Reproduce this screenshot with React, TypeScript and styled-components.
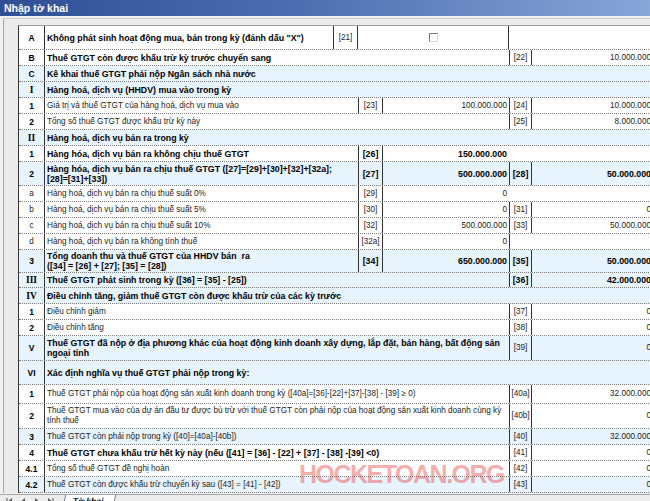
import React from "react";
import styled, { createGlobalStyle } from "styled-components";

const GlobalStyle = createGlobalStyle`
  html, body {
    margin: 0;
    padding: 0;
    background: #f0f0f0;
  }
  body {
    font-family: "Liberation Sans", Arial, sans-serif;
  }
`;

const COLS = "26px 288px 25px 25px 126px 23px 121px";

const Window = styled.div`
  position: relative;
  width: 650px;
  height: 501px;
  overflow: hidden;
  display: flex;
  flex-direction: column;
  background: #f0f0f0;
`;

const TitleBar = styled.div`
  flex: none;
  height: 16px;
  padding-left: 4px;
  line-height: 16px;
  color: #fff;
  font-size: 10.5px;
  font-weight: bold;
  background: linear-gradient(to right, #2f4f94 0%, #4c6daf 45%, #88a6d8 100%);
`;

const Sheet = styled.div`
  flex: none;
  margin: 2px 0 0 3px;
  padding: 6px 0 0 14px;
  border-top: 1px solid #cbcbcb;
  border-left: 1px solid #a7a7a7;
  background: #ebebeb;
`;

const Table = styled.div`
  width: 636px;
  border-top: 1px solid #a0a0a0;
  border-left: 1px solid #333;
  background: #fff;
`;

const Row = styled.div<{ $h: number; $blue?: boolean }>`
  display: grid;
  grid-template-columns: ${COLS};
  height: ${(p) => p.$h}px;
  box-sizing: border-box;
  border-bottom: 1px dotted #7d7d7d;
  background: ${(p) => (p.$blue ? "#e7f3fd" : "#fff")};
`;

const Base = styled.div<{ $span?: number; $bold?: boolean }>`
  grid-column: span ${(p) => p.$span ?? 1};
  box-sizing: border-box;
  display: flex;
  align-items: center;
  min-width: 0;
  overflow: hidden;
  white-space: nowrap;
  line-height: 10px;
  color: ${(p) => (p.$bold ? "#000" : "#1c1c1c")};
  font-size: ${(p) => (p.$bold ? "8.8px" : "8.2px")};
  font-weight: ${(p) => (p.$bold ? "bold" : "normal")};
`;

const Stt = styled(Base)<{ $serif?: boolean }>`
  justify-content: center;
  border-right: 1px solid #333;
  font-family: ${(p) => (p.$serif ? '"Liberation Serif", serif' : "inherit")};
  font-size: ${(p) => (p.$serif ? "9.5px" : p.$bold ? "8.5px" : "8.2px")};
`;

const Desc = styled(Base)`
  padding-left: 2px;
`;

const Code = styled(Base)`
  justify-content: center;
  border-left: 1px solid #333;
  border-right: 1px solid #333;
`;

const Val = styled(Base)`
  justify-content: flex-end;
  padding-right: 2px;
`;

const Blank = styled(Base)<{ $edge?: boolean }>`
  border-left: ${(p) => (p.$edge ? "1px solid #333" : "none")};
`;

const CheckCell = styled(Base)`
  justify-content: center;
  border-right: 1px solid #333;
`;

const CheckBox = styled.span`
  width: 7px;
  height: 7px;
  border: 1px solid;
  border-color: #7a7a7a #d8d8d8 #d8d8d8 #7a7a7a;
  background: #fff;
`;

const TabBar = styled.div`
  flex: none;
  display: flex;
  align-items: flex-start;
  gap: 4px;
  height: 12px;
  margin-top: 1px;
  padding-left: 6px;
  border-top: 1px solid #a9a9a9;
  background: #ececec;
`;

const NavButton = styled.span`
  display: flex;
  align-items: center;
  justify-content: center;
  width: 9px;
  height: 10px;
  margin-top: 1px;
  color: #555;
`;

const SheetTab = styled.span`
  margin-left: 6px;
  padding: 0 10px 0 8px;
  height: 11px;
  line-height: 13px;
  font-size: 8.5px;
  font-weight: bold;
  background: #fff;
  border-left: 1px solid #7a7a7a;
  border-right: 1px solid #7a7a7a;
  transform: skewX(-12deg);
`;

const Watermark = styled.div`
  position: absolute;
  left: 299px;
  top: 462px;
  font-size: 25px;
  line-height: 25px;
  font-weight: bold;
  letter-spacing: -1.5px;
  color: rgba(232, 70, 70, 0.45);
  pointer-events: none;
`;

type CellData =
  | { t: "d"; text: React.ReactNode; span: number; bold?: boolean }
  | { t: "c"; text: string; bold?: boolean }
  | { t: "v"; text: string; bold?: boolean }
  | { t: "e"; span: number; edge?: boolean }
  | { t: "x"; span: number };

type RowData = {
  stt: string;
  h?: number;
  blue?: boolean;
  serif?: boolean;
  plain?: boolean;
  cells: CellData[];
};

const d = (text: React.ReactNode, span: number, bold = false): CellData => ({ t: "d", text, span, bold });
const c = (text: string, bold = false): CellData => ({ t: "c", text, bold });
const v = (text: string, bold = false): CellData => ({ t: "v", text, bold });
const e = (span: number, edge = false): CellData => ({ t: "e", span, edge });

const rows: RowData[] = [
  { stt: "A", h: 24, cells: [d('Không phát sinh hoạt động mua, bán trong kỳ (đánh dấu "X")', 1, true), c("[21]"), { t: "x", span: 2 }, e(2)] },
  { stt: "B", cells: [d("Thuế GTGT còn được khấu trừ kỳ trước chuyển sang", 4, true), c("[22]"), v("10.000.000")] },
  { stt: "C", blue: true, cells: [d("Kê khai thuế GTGT phải nộp Ngân sách nhà nước", 6, true)] },
  { stt: "I", serif: true, blue: true, cells: [d("Hàng hoá, dịch vụ (HHDV) mua vào trong kỳ", 6, true)] },
  { stt: "1", cells: [d("Giá trị và thuế GTGT của hàng hoá, dịch vụ mua vào", 2), c("[23]"), v("100.000.000"), c("[24]"), v("10.000.000")] },
  { stt: "2", cells: [d("Tổng số thuế GTGT  được khấu trừ kỳ này", 4), c("[25]"), v("8.000.000")] },
  { stt: "II", serif: true, blue: true, cells: [d("Hàng hoá, dịch vụ bán ra trong kỳ", 6, true)] },
  { stt: "1", cells: [d("Hàng hóa, dịch vụ bán ra không chịu thuế GTGT", 2, true), c("[26]", true), v("150.000.000", true), e(2)] },
  {
    stt: "2",
    h: 24,
    blue: true,
    cells: [
      d(<>Hàng hóa, dịch vụ bán ra chịu thuế GTGT ([27]=[29]+[30]+[32]+[32a];<br />[28]=[31]+[33])</>, 2, true),
      c("[27]", true),
      v("500.000.000", true),
      c("[28]", true),
      v("50.000.000", true),
    ],
  },
  { stt: "a", plain: true, cells: [d("Hàng hoá, dịch vụ bán ra chịu thuế suất 0%", 2), c("[29]"), v("0"), e(2)] },
  { stt: "b", plain: true, cells: [d("Hàng hoá, dịch vụ bán ra chịu thuế suất 5%", 2), c("[30]"), v("0"), c("[31]"), v("0")] },
  { stt: "c", plain: true, cells: [d("Hàng hoá, dịch vụ bán ra chịu thuế suất 10%", 2), c("[32]"), v("500.000.000"), c("[33]"), v("50.000.000")] },
  { stt: "d", plain: true, cells: [d("Hàng hoá, dịch vụ bán ra không tính thuế", 2), c("[32a]"), v("0"), e(2, true)] },
  {
    stt: "3",
    h: 23,
    blue: true,
    cells: [
      d(<>Tổng doanh thu và thuế GTGT của HHDV bán&nbsp; ra<br />([34] = [26] + [27]; [35] = [28])</>, 2, true),
      c("[34]", true),
      v("650.000.000", true),
      c("[35]", true),
      v("50.000.000", true),
    ],
  },
  { stt: "III", serif: true, h: 15, blue: true, cells: [d("Thuế GTGT phát sinh trong kỳ ([36] = [35] - [25])", 4, true), c("[36]", true), v("42.000.000", true)] },
  { stt: "IV", serif: true, blue: true, cells: [d("Điều chỉnh tăng, giảm thuế GTGT còn được khấu trừ của các kỳ trước", 6, true)] },
  { stt: "1", cells: [d("Điều chỉnh giảm", 4), c("[37]"), v("0")] },
  { stt: "2", cells: [d("Điều chỉnh tăng", 4), c("[38]"), v("0")] },
  {
    stt: "V",
    h: 25,
    blue: true,
    cells: [
      d(<>Thuế GTGT đã nộp ở địa phương khác của hoạt động kinh doanh xây dựng, lắp đặt, bán hàng, bất động sản<br />ngoại tỉnh</>, 4, true),
      c("[39]"),
      v("0"),
    ],
  },
  { stt: "VI", h: 24, blue: true, cells: [d("Xác định nghĩa vụ thuế GTGT phải nộp trong kỳ:", 6, true)] },
  { stt: "1", h: 19, cells: [d("Thuế GTGT phải nộp của hoạt động sản xuất kinh doanh trong kỳ ([40a]=[36]-[22]+[37]-[38] - [39] ≥ 0)", 4), c("[40a]"), v("32.000.000")] },
  {
    stt: "2",
    h: 25,
    cells: [
      d(<>Thuế GTGT mua vào của dự án đầu tư được bù trừ với thuế GTGT còn phải nộp của hoạt động sản xuất kinh doanh cùng kỳ<br />tính thuế</>, 4),
      c("[40b]"),
      v("0"),
    ],
  },
  { stt: "3", blue: true, cells: [d("Thuế GTGT còn phải nộp trong kỳ ([40]=[40a]-[40b])", 4), c("[40]"), v("32.000.000")] },
  { stt: "4", cells: [d("Thuế GTGT chưa khấu trừ hết kỳ này (nếu ([41] = [36] - [22] + [37] - [38] -[39] <0)", 4, true), c("[41]"), v("0")] },
  { stt: "4.1", cells: [d("Tổng số thuế GTGT đề nghị hoàn", 4), c("[42]"), v("0")] },
  { stt: "4.2", blue: true, cells: [d("Thuế GTGT còn được khấu trừ chuyển kỳ sau ([43] = [41] - [42])", 4), c("[43]"), v("0")] },
];

function renderCell(cell: CellData, i: number) {
  switch (cell.t) {
    case "d":
      return (
        <Desc key={i} $span={cell.span} $bold={cell.bold}>
          <span>{cell.text}</span>
        </Desc>
      );
    case "c":
      return (
        <Code key={i} $bold={cell.bold}>
          {cell.text}
        </Code>
      );
    case "v":
      return (
        <Val key={i} $bold={cell.bold}>
          {cell.text}
        </Val>
      );
    case "e":
      return <Blank key={i} $span={cell.span} $edge={cell.edge} />;
    case "x":
      return (
        <CheckCell key={i} $span={cell.span}>
          <CheckBox />
        </CheckCell>
      );
  }
}

function Arrow({ dir, bar }: { dir: "left" | "right"; bar?: boolean }) {
  const tri = dir === "left" ? "M6 1 L2 4.5 L6 8 Z" : "M3 1 L7 4.5 L3 8 Z";
  const line = dir === "left" ? "M1 1 V8" : "M8 1 V8";
  return (
    <svg width="9" height="9" viewBox="0 0 9 9">
      <path d={tri} fill="#555" />
      {bar && <path d={line} stroke="#555" strokeWidth="1" />}
    </svg>
  );
}

export default function App() {
  return (
    <Window>
      <GlobalStyle />
      <TitleBar>Nhập tờ khai</TitleBar>
      <Sheet>
        <Table>
          {rows.map((row, r) => (
            <Row key={r} $h={row.h ?? 16} $blue={row.blue}>
              <Stt $bold={!row.plain} $serif={row.serif}>
                {row.stt}
              </Stt>
              {row.cells.map(renderCell)}
            </Row>
          ))}
        </Table>
      </Sheet>
      <TabBar>
        <NavButton>
          <Arrow dir="left" bar />
        </NavButton>
        <NavButton>
          <Arrow dir="left" />
        </NavButton>
        <NavButton>
          <Arrow dir="right" />
        </NavButton>
        <NavButton>
          <Arrow dir="right" bar />
        </NavButton>
        <SheetTab>Tờ khai</SheetTab>
      </TabBar>
      <Watermark>HOCKETOAN.ORG</Watermark>
    </Window>
  );
}
